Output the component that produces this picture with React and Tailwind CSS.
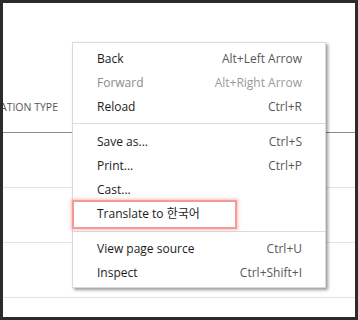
const FONT = "font-['Segoe_UI','Open_Sans','Noto_Sans_CJK_KR',sans-serif]";

const groups = [
  [
    { label: 'Back', shortcut: 'Alt+Left Arrow' },
    { label: 'Forward', shortcut: 'Alt+Right Arrow', disabled: true },
    { label: 'Reload', shortcut: 'Ctrl+R' },
  ],
  [
    { label: 'Save as...', shortcut: 'Ctrl+S' },
    { label: 'Print...', shortcut: 'Ctrl+P' },
    { label: 'Cast...' },
    { label: 'Translate to 한국어', highlight: true },
  ],
  [
    { label: 'View page source', shortcut: 'Ctrl+U' },
    { label: 'Inspect', shortcut: 'Ctrl+Shift+I' },
  ],
];

function MenuItem({ item }) {
  return (
    <div className="relative flex h-6 items-center justify-between pl-6 pr-[23px] text-[12px] leading-6">
      <span className={item.disabled ? 'text-[#8c8c8c]' : 'text-[#1b1b1b]'}>{item.label}</span>
      {item.shortcut && (
        <span className={item.disabled ? 'text-[#9a9a9a]' : 'text-[#585858]'}>{item.shortcut}</span>
      )}
      {item.highlight && (
        <div className="absolute -left-px top-[-2px] h-[29px] w-[165px] border-2 border-[#f39a9a] shadow-[0_0_3px_1px_rgba(240,110,110,0.45)]" />
      )}
    </div>
  );
}

function ContextMenu() {
  return (
    <div
      className={`absolute left-[69px] top-[39px] w-[254px] border border-[#d9d9d9] bg-white pt-1 pb-[2px] shadow-[2px_2px_3px_rgba(0,0,0,0.4)] ${FONT}`}
    >
      {groups.map((group, gi) => (
        <div key={gi}>
          {gi > 0 && <div className={`h-px bg-[#dcdcdc] ${gi === 1 ? 'mt-1 mb-[6px]' : 'mt-[5px] mb-[5px]'}`} />}
          {group.map((item) => (
            <MenuItem key={item.label} item={item} />
          ))}
        </div>
      ))}
    </div>
  );
}

export default function App() {
  return (
    <div className="h-[320px] w-[358px] bg-[#2b2b2b] p-[3px]">
      <div className={`relative h-[314px] overflow-hidden bg-white ${FONT}`}>
        <div className="h-[130px] border-b border-[#8c8c8c] pt-[90px]">
          <span className="-ml-[3px] text-[10.5px] font-medium leading-4 text-[#555]">ATION TYPE</span>
        </div>
        <div className="h-[55px] border-b border-[#e3e3e3]" />
        <div className="h-[55px] border-b border-[#e3e3e3]" />
        <div className="h-[55px] border-b border-[#e3e3e3]" />
        <ContextMenu />
      </div>
    </div>
  );
}
